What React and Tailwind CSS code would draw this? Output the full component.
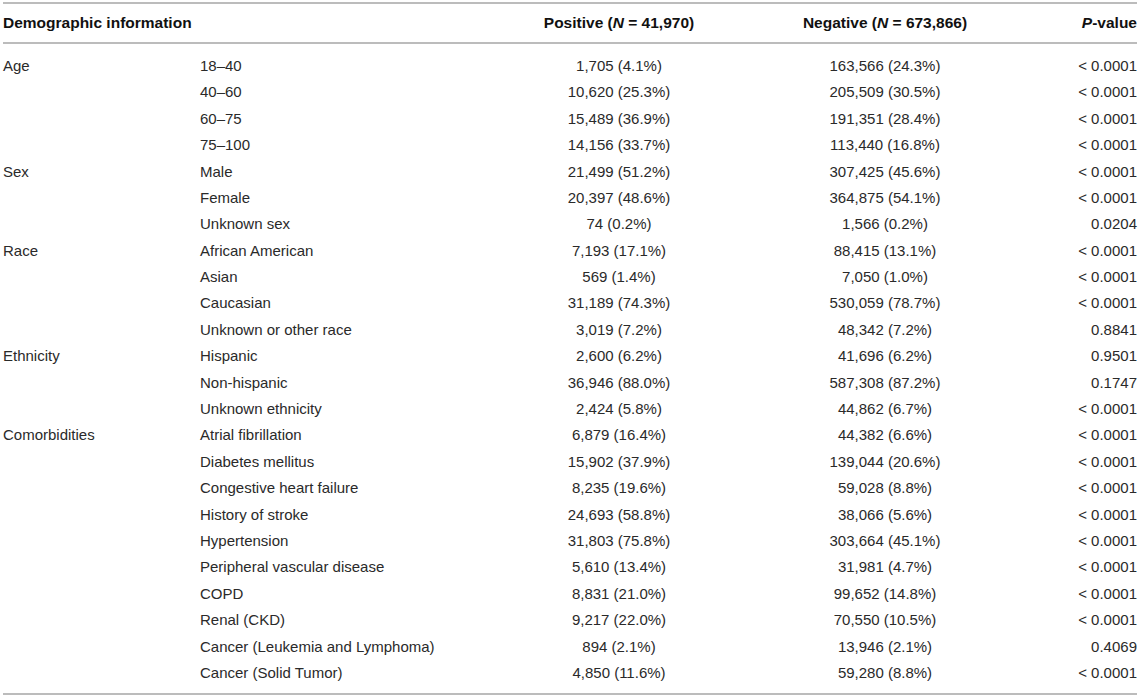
import React from "react";

const sections = [
  {
    name: "Age",
    rows: [
      ["18–40", "1,705 (4.1%)", "163,566 (24.3%)", "< 0.0001"],
      ["40–60", "10,620 (25.3%)", "205,509 (30.5%)", "< 0.0001"],
      ["60–75", "15,489 (36.9%)", "191,351 (28.4%)", "< 0.0001"],
      ["75–100", "14,156 (33.7%)", "113,440 (16.8%)", "< 0.0001"],
    ],
  },
  {
    name: "Sex",
    rows: [
      ["Male", "21,499 (51.2%)", "307,425 (45.6%)", "< 0.0001"],
      ["Female", "20,397 (48.6%)", "364,875 (54.1%)", "< 0.0001"],
      ["Unknown sex", "74 (0.2%)", "1,566 (0.2%)", "0.0204"],
    ],
  },
  {
    name: "Race",
    rows: [
      ["African American", "7,193 (17.1%)", "88,415 (13.1%)", "< 0.0001"],
      ["Asian", "569 (1.4%)", "7,050 (1.0%)", "< 0.0001"],
      ["Caucasian", "31,189 (74.3%)", "530,059 (78.7%)", "< 0.0001"],
      ["Unknown or other race", "3,019 (7.2%)", "48,342 (7.2%)", "0.8841"],
    ],
  },
  {
    name: "Ethnicity",
    rows: [
      ["Hispanic", "2,600 (6.2%)", "41,696 (6.2%)", "0.9501"],
      ["Non-hispanic", "36,946 (88.0%)", "587,308 (87.2%)", "0.1747"],
      ["Unknown ethnicity", "2,424 (5.8%)", "44,862 (6.7%)", "< 0.0001"],
    ],
  },
  {
    name: "Comorbidities",
    rows: [
      ["Atrial fibrillation", "6,879 (16.4%)", "44,382 (6.6%)", "< 0.0001"],
      ["Diabetes mellitus", "15,902 (37.9%)", "139,044 (20.6%)", "< 0.0001"],
      ["Congestive heart failure", "8,235 (19.6%)", "59,028 (8.8%)", "< 0.0001"],
      ["History of stroke", "24,693 (58.8%)", "38,066 (5.6%)", "< 0.0001"],
      ["Hypertension", "31,803 (75.8%)", "303,664 (45.1%)", "< 0.0001"],
      ["Peripheral vascular disease", "5,610 (13.4%)", "31,981 (4.7%)", "< 0.0001"],
      ["COPD", "8,831 (21.0%)", "99,652 (14.8%)", "< 0.0001"],
      ["Renal (CKD)", "9,217 (22.0%)", "70,550 (10.5%)", "< 0.0001"],
      ["Cancer (Leukemia and Lymphoma)", "894 (2.1%)", "13,946 (2.1%)", "0.4069"],
      ["Cancer (Solid Tumor)", "4,850 (11.6%)", "59,280 (8.8%)", "< 0.0001"],
    ],
  },
];

const cols = "grid grid-cols-[197px_319px_200px_332px_86px]";

export default function App() {
  return (
    <div
      className="w-[1142px] h-[698px] bg-white pt-[2px] pl-[3px] pr-[5px] text-[15px] text-[#2a2a2a]"
      style={{ fontFamily: '"Liberation Sans", Arial, sans-serif' }}
    >
      <div className="border-t-2 border-b-2 border-[#bcbcbc]">
        <div className={`${cols} h-[38px] items-center font-bold text-[15.5px] text-[#111] border-b-2 border-[#bcbcbc] box-content`}>
          <div>Demographic information</div>
          <div></div>
          <div className="text-center">
            Positive (<i>N</i> = 41,970)
          </div>
          <div className="text-center">
            Negative (<i>N</i> = 673,866)
          </div>
          <div className="text-right">
            <i>P</i>-value
          </div>
        </div>
        <div className="pt-[9px] pb-[7px]">
          {sections.map((s) =>
            s.rows.map((r, i) => (
              <div key={s.name + i} className={`${cols} h-[26.4px] items-center`}>
                <div>{i === 0 ? s.name : ""}</div>
                <div>{r[0]}</div>
                <div className="text-center">{r[1]}</div>
                <div className="text-center">{r[2]}</div>
                <div className="text-right">{r[3]}</div>
              </div>
            ))
          )}
        </div>
      </div>
    </div>
  );
}
